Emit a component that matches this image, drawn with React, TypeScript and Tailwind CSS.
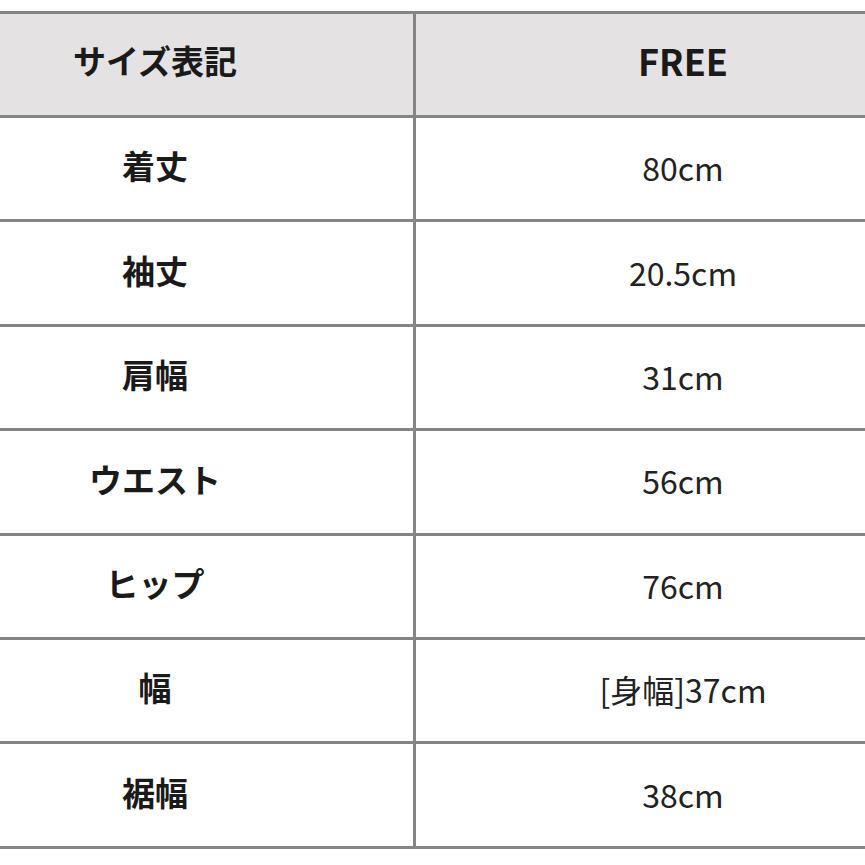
const rows: [string, string][] = [
  ["着丈", "80cm"],
  ["袖丈", "20.5cm"],
  ["肩幅", "31cm"],
  ["ウエスト", "56cm"],
  ["ヒップ", "76cm"],
  ["幅", "[身幅]37cm"],
  ["裾幅", "38cm"],
];

const font = { fontFamily: '"Noto Sans CJK JP", "Noto Sans", sans-serif' };

export default function App() {
  return (
    <div className="h-[865px] w-[865px] overflow-hidden bg-white pt-[11px]" style={font}>
      <div className="ml-[-103px] w-[1060px] border-t-[3px] border-[#858585]">
        <div className="flex h-[104px] border-b-[3px] border-[#858585] bg-[#e4e2e3]">
          <div className="flex w-[519px] items-center justify-center border-r-[3px] border-[#858585] pb-[8px] text-[33px] font-bold text-[#1a1a1a]">
            サイズ表記
          </div>
          <div className="flex w-[534px] items-center justify-center pb-[9px] text-[36px] font-bold text-[#1a1a1a]">
            FREE
          </div>
        </div>
        {rows.map(([label, value]) => (
          <div key={label} className="flex h-[104.4px] border-b-[3px] border-[#858585]">
            <div className="flex w-[519px] items-center justify-center border-r-[3px] border-[#858585] pb-[5px] text-[33px] font-bold text-[#1a1a1a]">
              {label}
            </div>
            <div className="flex w-[534px] items-center justify-center pb-[3px] text-[32px] text-[#222]">
              {value}
            </div>
          </div>
        ))}
      </div>
    </div>
  );
}
